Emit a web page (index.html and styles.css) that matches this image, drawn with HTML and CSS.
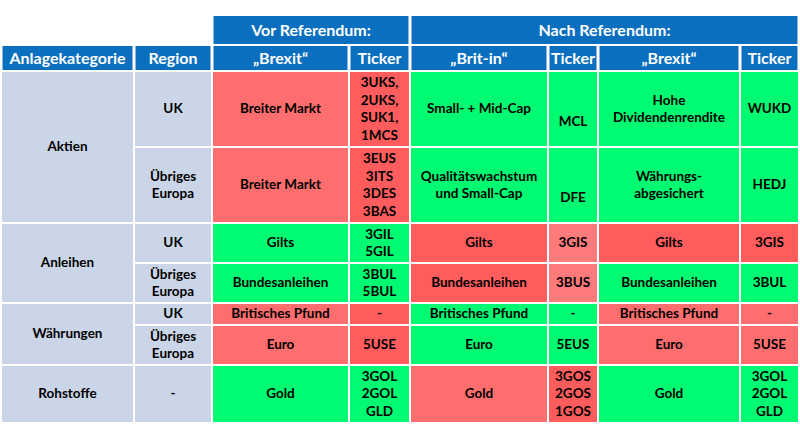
FILE: index.html
```html
<!DOCTYPE html>
<html lang="de">
<head>
<meta charset="utf-8">
<title>Referendum Tabelle</title>
<link rel="stylesheet" href="styles.css">
</head>
<body>
<table class="grid">
  <colgroup>
    <col class="c1"><col class="c2"><col class="c3"><col class="c4">
    <col class="c5"><col class="c6"><col class="c7"><col class="c8">
  </colgroup>
  <tr class="h1">
    <td colspan="2" class="blank"></td>
    <th colspan="2">Vor Referendum:</th>
    <th colspan="4">Nach Referendum:</th>
  </tr>
  <tr class="h2">
    <th>Anlagekategorie</th>
    <th>Region</th>
    <th>„Brexit“</th>
    <th>Ticker</th>
    <th>„Brit-in“</th>
    <th>Ticker</th>
    <th>„Brexit“</th>
    <th>Ticker</th>
  </tr>
  <tr class="ra">
    <td rowspan="2" class="cat">Aktien</td>
    <td class="cat">UK</td>
    <td class="r1">Breiter Markt</td>
    <td class="r2">3UKS,<br>2UKS,<br>SUK1,<br>1MCS</td>
    <td class="g">Small- + Mid-Cap</td>
    <td class="g low">MCL</td>
    <td class="g">Hohe<br>Dividendenrendite</td>
    <td class="g">WUKD</td>
  </tr>
  <tr class="ra">
    <td class="cat">Übriges<br>Europa</td>
    <td class="r1">Breiter Markt</td>
    <td class="r2">3EUS<br>3ITS<br>3DES<br>3BAS</td>
    <td class="g">Qualitätswachstum<br>und Small-Cap</td>
    <td class="g low">DFE</td>
    <td class="g">Währungs-<br>abgesichert</td>
    <td class="g">HEDJ</td>
  </tr>
  <tr class="rb">
    <td rowspan="2" class="cat">Anleihen</td>
    <td class="cat">UK</td>
    <td class="g">Gilts</td>
    <td class="g">3GIL<br>5GIL</td>
    <td class="r2">Gilts</td>
    <td class="r3">3GIS</td>
    <td class="r2">Gilts</td>
    <td class="r2">3GIS</td>
  </tr>
  <tr class="rb">
    <td class="cat">Übriges<br>Europa</td>
    <td class="g">Bundesanleihen</td>
    <td class="g">3BUL<br>5BUL</td>
    <td class="r2">Bundesanleihen</td>
    <td class="r3">3BUS</td>
    <td class="g">Bundesanleihen</td>
    <td class="g">3BUL</td>
  </tr>
  <tr class="rc">
    <td rowspan="2" class="cat">Währungen</td>
    <td class="cat">UK</td>
    <td class="r1">Britisches Pfund</td>
    <td class="r2">-</td>
    <td class="g">Britisches Pfund</td>
    <td class="g">-</td>
    <td class="r1">Britisches Pfund</td>
    <td class="r1">-</td>
  </tr>
  <tr class="rd">
    <td class="cat">Übriges<br>Europa</td>
    <td class="r1">Euro</td>
    <td class="r2">5USE</td>
    <td class="g">Euro</td>
    <td class="g">5EUS</td>
    <td class="r1">Euro</td>
    <td class="r1">5USE</td>
  </tr>
  <tr class="re">
    <td class="cat">Rohstoffe</td>
    <td class="cat">-</td>
    <td class="g">Gold</td>
    <td class="g">3GOL<br>2GOL<br>GLD</td>
    <td class="r1">Gold</td>
    <td class="r2">3GOS<br>2GOS<br>1GOS</td>
    <td class="g">Gold</td>
    <td class="g">3GOL<br>2GOL<br>GLD</td>
  </tr>
</table>
</body>
</html>
```

FILE: styles.css
```css
html, body {
  margin: 0;
  padding: 0;
  background: #ffffff;
}

.grid {
  margin-top: 14px;
  width: 800px;
  table-layout: fixed;
  border-collapse: separate;
  border-spacing: 2px;
  font-family: Lato, "Open Sans", "Liberation Sans", sans-serif;
  font-weight: 700;
  color: #000000;
}

.c1 { width: 131px; }
.c2 { width: 76px; }
.c3 { width: 135px; }
.c4 { width: 59px; }
.c5 { width: 136px; }
.c6 { width: 48px; }
.c7 { width: 140px; }
.c8 { width: 57px; }

.grid th,
.grid td {
  padding: 0 1px;
  text-align: center;
  vertical-align: middle;
  font-size: 13.5px;
  line-height: 17.5px;
  overflow: hidden;
  white-space: nowrap;
}

.grid th {
  background: #0a6fbf;
  color: #ffffff;
  font-size: 16px;
  line-height: 20px;
  box-shadow: inset 1px 0 0 #8db6e2, inset -1px 0 0 #8db6e2;
}

.grid td.blank {
  background: transparent;
}

.h1 { height: 28px; }
.h2 { height: 24px; }
.ra { height: 74px; }
.rb { height: 38px; }
.rc { height: 20px; }
.rd { height: 38px; }
.re { height: 56px; }

.cat { background: #cbd5e8; }
.g { background: #00fa72; }
.r1 { background: #ff6e6e; }
.r2 { background: #ff5d5d; }
.r3 { background: #ff7a7a; }

.grid td.low {
  padding-top: 26px;
}
```
